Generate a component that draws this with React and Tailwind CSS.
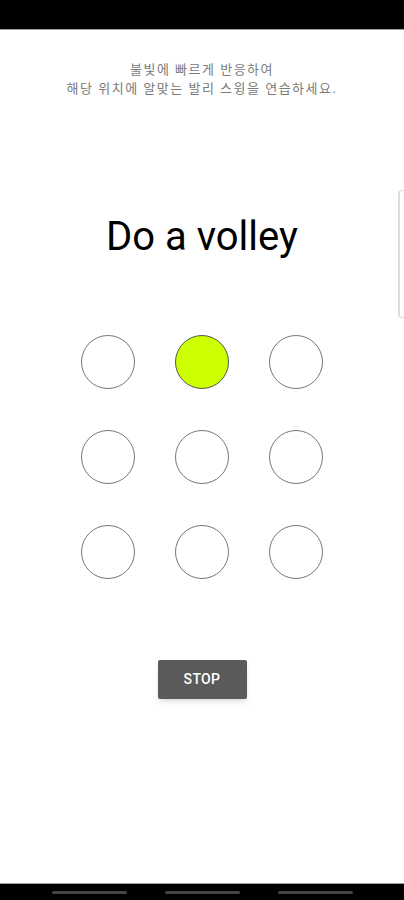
import React from 'react';

const lit = 1;

function App() {
  return (
    <div className="w-[404px] h-[900px] bg-white flex flex-col relative overflow-hidden" style={{ fontFamily: 'Roboto, "Noto Sans CJK KR", sans-serif' }}>
      {/* Status bar */}
      <div className="h-[30px] bg-black border-b border-gray-400 shrink-0" />

      {/* Instructions */}
      <div className="mt-[30px] text-center text-[13px] leading-[19px] tracking-[1.5px] text-[#7a7a7a]">
        <p>불빛에 빠르게 반응하여</p>
        <p>해당 위치에 알맞는 발리 스윙을 연습하세요.</p>
      </div>

      {/* Prompt */}
      <h1 className="mt-[116px] text-center text-[40px] leading-[46px] text-black">Do a volley</h1>

      {/* Light grid */}
      <div className="mt-[75px] mx-auto grid grid-cols-3 gap-x-[40px] gap-y-[41px]">
        {Array.from({ length: 9 }).map((_, i) => (
          <div
            key={i}
            className={
              i === lit
                ? 'w-[54px] h-[54px] rounded-full border border-[#555] bg-[#ccff00]'
                : 'w-[54px] h-[54px] rounded-full border border-[#777] bg-white'
            }
          />
        ))}
      </div>

      {/* Stop button */}
      <button className="mt-[81px] mx-auto w-[89px] h-[39px] bg-[#5a5a5a] text-white text-[14px] font-medium rounded-[2px] shadow-md tracking-wide">
        STOP
      </button>

      {/* Side drawer handle */}
      <div className="absolute right-0 top-[190px] w-[6px] h-[128px] border-l-2 border-y border-[#dcdcdc] rounded-l-[4px]" />

      {/* Nav bar */}
      <div className="mt-auto h-[17px] bg-black border-t border-gray-400 flex items-center justify-center gap-[38px]">
        <div className="w-[75px] h-[3px] rounded-full bg-[#444]" />
        <div className="w-[75px] h-[3px] rounded-full bg-[#444]" />
        <div className="w-[75px] h-[3px] rounded-full bg-[#444]" />
      </div>
    </div>
  );
}

export default App;
